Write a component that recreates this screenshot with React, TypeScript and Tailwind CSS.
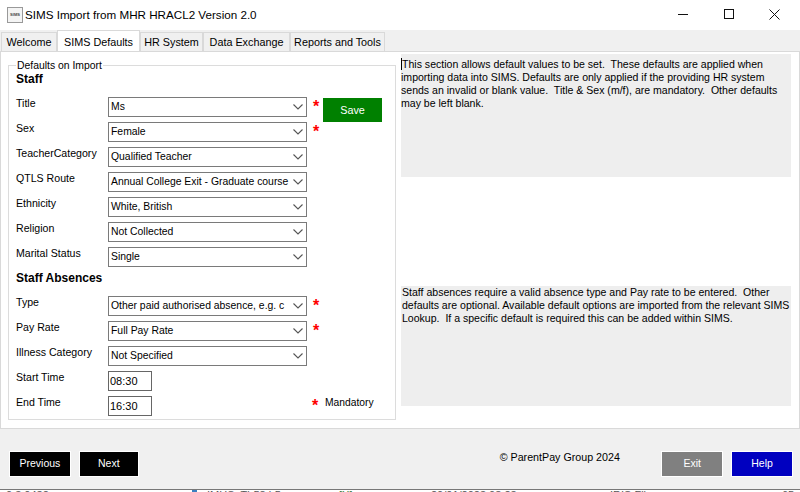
import React from "react";

const font = { fontFamily: '"Liberation Sans", Arial, sans-serif' };

function Chevron() {
  return (
    <svg width="10" height="6" viewBox="0 0 10 6" className="shrink-0">
      <path d="M0.5 0.5 L5 5 L9.5 0.5" fill="none" stroke="#555" strokeWidth="1.1" />
    </svg>
  );
}

function Star() {
  return <span className="block text-[#ff0000] text-[16px] leading-[16px] font-bold w-[10px] mt-[2px]">*</span>;
}

function Row({ label, value, star, children }: { label: string; value: string; star?: boolean; children?: React.ReactNode }) {
  return (
    <div className="flex h-5 items-start">
      <div className="w-[92px] -mt-[1px] leading-[14px] shrink-0 text-[10.6px]">{label}</div>
      <div className="w-[199px] h-5 border border-[#7a7a7a] bg-white flex items-center justify-between pl-[2px] pr-[3px] shrink-0 overflow-hidden">
        <span className="whitespace-nowrap text-[10.4px]">{value}</span>
        <Chevron />
      </div>
      <div className="w-[16px] pl-[6px] shrink-0">{star ? <Star /> : null}</div>
      {children}
    </div>
  );
}

function TimeRow({ label, value, children }: { label: string; value: string; children?: React.ReactNode }) {
  return (
    <div className="flex h-5 items-start">
      <div className="w-[92px] -mt-[1px] leading-[14px] shrink-0 text-[10.6px]">{label}</div>
      <div className="w-11 h-5 border border-[#666] bg-white flex items-center pl-[1px] shrink-0 text-[11px]">{value}</div>
      {children}
    </div>
  );
}

function Tab({ label, active, width }: { label: string; active?: boolean; width: string }) {
  return (
    <div
      className={
        active
          ? `${width} h-[21px] -mt-[1px] bg-white border border-b-0 border-[#d9d9d9] flex items-start justify-center pt-[3px] z-10 -mb-[1px] whitespace-nowrap`
          : `${width} h-[20px] mt-[1px] bg-[#f0f0f0] border border-[#d9d9d9] flex items-center justify-center whitespace-nowrap`
      }
    >
      {label}
    </div>
  );
}

function Button({ label, bg, width }: { label: string; bg: string; width: string }) {
  return <div className={`${width} h-[26px] ${bg} text-white text-[10.5px] border border-white flex items-center justify-center`}>{label}</div>;
}

export default function App() {
  return (
    <div style={font} className="w-[800px] h-[492px] bg-white text-[10.8px] text-black overflow-hidden flex flex-col">
      <div className="h-[489px] flex flex-col bg-[#f0f0f0] shrink-0">
        <div className="h-[30px] bg-white flex items-center shrink-0">
          <div className="ml-[7px] w-4 h-4 border border-[#999] bg-[#f4f4f4] flex items-center justify-center text-[4px] font-bold text-[#444]">SIMS</div>
          <div className="ml-[2px] text-[11.65px]">SIMS Import from MHR HRACL2 Version 2.0</div>
          <div className="ml-auto flex items-center">
            <svg width="10" height="10" viewBox="0 0 10 10" className="mr-[36px] -mt-[2px]"><path d="M0 5.5 H10" stroke="#111" strokeWidth="1" /></svg>
            <svg width="10" height="10" viewBox="0 0 10 10" className="mr-[35px] -mt-[2px]"><rect x="0.5" y="0.5" width="9" height="9" fill="none" stroke="#111" strokeWidth="1" /></svg>
            <svg width="11" height="11" viewBox="0 0 11 11" className="mr-[20px] -mt-[2px]"><path d="M0.5 0.5 L10.5 10.5 M10.5 0.5 L0.5 10.5" stroke="#111" strokeWidth="1" /></svg>
          </div>
        </div>
        <div className="h-[21px] pl-[1px] pt-[1px] flex shrink-0 items-start">
          <Tab label="Welcome" width="w-[56px]" />
          <Tab label="SIMS Defaults" active width="w-[83px]" />
          <Tab label="HR System" width="w-[63px]" />
          <Tab label="Data Exchange" width="w-[87px]" />
          <Tab label="Reports and Tools" width="w-[95px]" />
        </div>
        <div className="h-[378px] bg-white border border-[#d9d9d9] flex shrink-0 pr-[8px]">
          <fieldset className="w-[388px] h-[361px] ml-[7px] mt-[7px] border border-[#dcdcdc] px-[7px] shrink-0">
            <legend className="px-[1px] leading-[13px] text-[10.4px]">Defaults on Import</legend>
            <div className="font-bold leading-[14px] mb-[11px] text-[12px]">Staff</div>
            <div className="flex flex-col gap-[5px]">
              <Row label="Title" value="Ms" star>
                <div className="mt-[1px] w-[59px] h-[24px] bg-[#008000] text-white flex items-center justify-center shrink-0">Save</div>
              </Row>
              <Row label="Sex" value="Female" star />
              <Row label="TeacherCategory" value="Qualified Teacher" />
              <Row label="QTLS Route" value="Annual College Exit - Graduate course" />
              <Row label="Ethnicity" value="White, British" />
              <Row label="Religion" value="Not Collected" />
              <Row label="Marital Status" value="Single" />
            </div>
            <div className="font-bold leading-[14px] mt-[4px] mb-[11px] text-[12px]">Staff Absences</div>
            <div className="flex flex-col gap-[5px]">
              <Row label="Type" value="Other paid authorised absence, e.g. c" star />
              <Row label="Pay Rate" value="Full Pay Rate" star />
              <Row label="Illness Category" value="Not Specified" />
              <TimeRow label="Start Time" value="08:30" />
              <TimeRow label="End Time" value="16:30">
                <div className="ml-[160px] w-[13px]"><Star /></div>
                <div className="leading-[14px] text-[10.3px] whitespace-nowrap">Mandatory</div>
              </TimeRow>
            </div>
          </fieldset>
          <div className="ml-[5px] flex-1 flex flex-col mt-[2px] text-[10.55px] leading-[13px] whitespace-nowrap">
            <div className="h-[123px] bg-[#eeeeee] pt-[4px]">
              <span className="border-l border-black">This section allows default values to be set.&nbsp; These defaults are applied when</span>
              <br />importing data into SIMS. Defaults are only applied if the providing HR system
              <br />sends an invalid or blank value.&nbsp; Title &amp; Sex (m/f), are mandatory.&nbsp; Other defaults
              <br />may be left blank.
            </div>
            <div className="h-[120px] mt-[109px] bg-[#eeeeee] pl-[1px]">
              Staff absences require a valid absence type and Pay rate to be entered.&nbsp; Other
              <br />defaults are optional. Available default options are imported from the relevant SIMS
              <br />Lookup.&nbsp; If a specific default is required this can be added within SIMS.
            </div>
          </div>
        </div>
        <div className="flex-1 flex items-start pl-[9px] pr-[7px] pt-[22px]">
          <Button label="Previous" bg="bg-black" width="w-[62px]" />
          <div className="w-2" />
          <Button label="Next" bg="bg-black" width="w-[60px]" />
          <div className="ml-[361px] -mt-[1px] w-[162px] text-[10.7px] leading-[14px] whitespace-nowrap">© ParentPay Group 2024</div>
          <Button label="Exit" bg="bg-[#808080]" width="w-[62px]" />
          <div className="w-2" />
          <Button label="Help" bg="bg-[#0000c0]" width="w-[62px]" />
        </div>
      </div>
      <div className="h-[3px] bg-white border-t border-[#777] relative overflow-hidden text-[#555] text-[11px]">
        <span className="absolute left-[6px] -top-[1px] leading-[12px]">0 3 0432</span>
        <span className="absolute left-[192px] top-0 w-[5px] h-[3px] bg-[#3a7fc0]" />
        <span className="absolute left-[207px] -top-[1px] leading-[12px]">IMHS_Tb58.b5</span>
        <span className="absolute left-[339px] -top-[1px] leading-[12px] text-[#3a7a3a]">[X]</span>
        <span className="absolute left-[431px] -top-[1px] leading-[12px]">20/01/2023 08:23</span>
        <span className="absolute left-[610px] -top-[1px] leading-[12px]">IRIS File</span>
        <span className="absolute left-[782px] -top-[1px] leading-[12px]">65</span>
      </div>
    </div>
  );
}
